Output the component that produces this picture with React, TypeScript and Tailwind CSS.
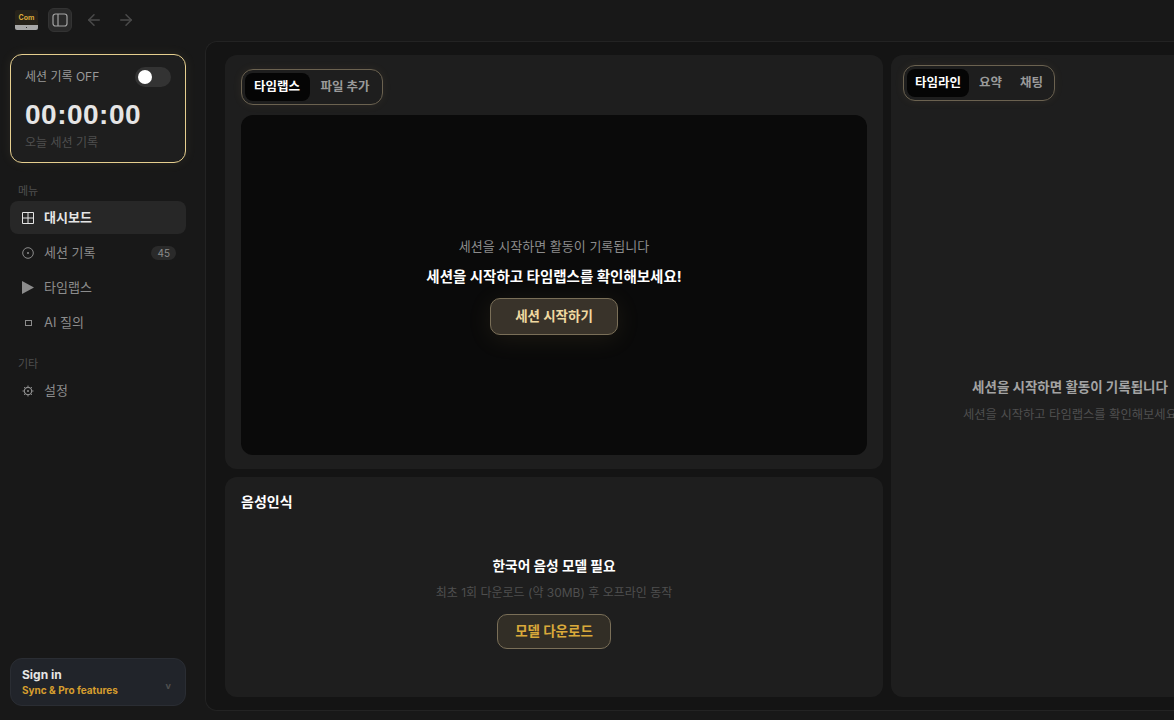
import { ArrowLeft, ArrowRight } from "lucide-react";
import type { ReactNode } from "react";

const FONT = "font-['Inter','Noto_Sans_CJK_KR',sans-serif]";

function PanelIcon() {
  return (
    <svg viewBox="0 0 16 16" className="h-4 w-4" fill="none" stroke="#a3a3a3" strokeWidth="1.2">
      <rect x="1" y="2" width="14" height="12" rx="2.5" />
      <path d="M6 2v12" />
    </svg>
  );
}

function Logo() {
  return (
    <div className="flex h-[20px] w-[23px] flex-col overflow-hidden rounded-[2px]">
      <div className="flex h-[15px] items-center justify-center bg-[#26221a] text-[7px] font-bold leading-none text-[#d9a93a]">
        Com
      </div>
      <div className="flex h-[5px] items-center justify-center bg-[#a8a8a8]">
        <span className="h-px w-px bg-[#333]" />
      </div>
    </div>
  );
}

function GridIcon() {
  return (
    <svg viewBox="0 0 12 12" className="h-3 w-3" fill="none" stroke="#e5e5e5" strokeWidth="1">
      <path d="M.5.5h11v11H.5zM6 .5v11M.5 6h11" />
    </svg>
  );
}

function DotCircleIcon() {
  return (
    <svg viewBox="0 0 12 12" className="h-3 w-3" fill="none" stroke="#8c8c8c" strokeWidth="1">
      <circle cx="6" cy="6" r="5.3" />
      <circle cx="6" cy="6" r="1" fill="#8c8c8c" stroke="none" />
    </svg>
  );
}

function PlayIcon() {
  return (
    <svg viewBox="0 0 12 13" className="h-[13px] w-3" fill="#8c8c8c">
      <path d="M0 0 12 6.5 0 13z" />
    </svg>
  );
}

function SquareIcon() {
  return <span className="h-[6px] w-[7px] border border-[#8c8c8c]" />;
}

function GearIcon() {
  return (
    <svg viewBox="0 0 12 12" className="h-3 w-3" fill="none" stroke="#8c8c8c">
      <circle cx="6" cy="6" r="3.7" strokeWidth="1.2" />
      <circle cx="6" cy="6" r="1" fill="#8c8c8c" stroke="none" />
      <path d="M6 .5v1.4M6 10.1v1.4M.5 6h1.4M10.1 6h1.4M2.1 2.1l1 1M8.9 8.9l1 1M2.1 9.9l1-1M8.9 3.1l1-1" strokeWidth="1" />
    </svg>
  );
}

function NavItem({ icon, label, active, badge }: { icon: ReactNode; label: string; active?: boolean; badge?: string }) {
  return (
    <div
      className={`flex h-[33px] items-center rounded-lg pl-[12px] pr-[10px] text-[13px] ${
        active ? "bg-[#272727] font-bold text-[#e5e5e5]" : "text-[#8c8c8c]"
      }`}
    >
      <span className="flex w-[12px] justify-center">{icon}</span>
      <span className="ml-[10px] flex-1">{label}</span>
      {badge && (
        <span className="rounded-full bg-[#2a2a2a] px-[6px] py-px text-[10px] leading-[12px] text-[#8c8c8c]">{badge}</span>
      )}
    </div>
  );
}

function Tabs({ items, pad }: { items: string[]; pad: string }) {
  return (
    <div className="flex w-fit gap-[2px] rounded-xl border border-[#6b6250] p-[3px] shadow-[0_0_10px_rgba(200,170,100,0.08)]">
      {items.map((t, i) => (
        <div
          key={t}
          className={`flex h-[28px] items-center rounded-lg text-[12.5px] font-bold ${pad} ${
            i === 0 ? "bg-[#050505] text-white" : "text-[#9a9a9a]"
          }`}
        >
          {t}
        </div>
      ))}
    </div>
  );
}

export default function App() {
  return (
    <div className={`flex h-[720px] w-[1174px] flex-col overflow-hidden bg-[#181818] ${FONT}`}>
      <div className="flex h-[41px] shrink-0 items-center pb-[1px] pl-[15px]">
        <Logo />
        <div className="ml-[10px] flex h-6 w-6 items-center justify-center rounded-md border border-[#333] bg-[#2a2a2a]">
          <PanelIcon />
        </div>
        <ArrowLeft className="ml-[13px] h-[18px] w-[18px] text-[#4a4a4a]" />
        <ArrowRight className="ml-[14px] h-[18px] w-[18px] text-[#4a4a4a]" />
      </div>

      <div className="flex min-h-0 flex-1 pb-[9px]">
        <aside className="flex w-[205px] shrink-0 flex-col pb-[5px] pl-[10px] pr-[19px] pt-[13px]">
          <div className="h-[109px] rounded-xl border border-[#e6cf8f] bg-[#1e1e1e] px-[14px] pt-[12px] shadow-[0_0_12px_rgba(230,207,143,0.08)]">
            <div className="flex items-center justify-between">
              <span className="text-[12px] text-[#999]">세션 기록 OFF</span>
              <div className="flex h-5 w-9 items-center rounded-full bg-[#333] px-[3px]">
                <span className="h-[14px] w-[14px] rounded-full bg-white" />
              </div>
            </div>
            <div className="mt-[11px] font-['Liberation_Sans',sans-serif] text-[28px] font-bold leading-[34px] tracking-[0.5px] text-[#e5e5e5]">
              00:00:00
            </div>
            <div className="mt-[2px] text-[12px] text-[#4f4f4f]">오늘 세션 기록</div>
          </div>

          <div className="mb-[2px] ml-[8px] mt-[21px] text-[11px] leading-[15px] text-[#4f4f4f]">메뉴</div>
          <div className="flex flex-col gap-[2px]">
            <NavItem icon={<GridIcon />} label="대시보드" active />
            <NavItem icon={<DotCircleIcon />} label="세션 기록" badge="45" />
            <NavItem icon={<PlayIcon />} label="타임랩스" />
            <NavItem icon={<SquareIcon />} label="AI 질의" />
          </div>
          <div className="mb-[2px] ml-[8px] mt-[18px] text-[11px] leading-[15px] text-[#4f4f4f]">기타</div>
          <NavItem icon={<GearIcon />} label="설정" />

          <div className="mt-auto flex h-[48px] items-center justify-between rounded-xl border border-[#2a2d33] bg-[#21242a] pl-[11px] pr-[14px]">
            <div>
              <div className="text-[12px] font-bold leading-[16px] text-[#e5e5e5]">Sign in</div>
              <div className="text-[10px] font-bold leading-[14px] text-[#d69e2e]">Sync &amp; Pro features</div>
            </div>
            <span className="mt-[8px] text-[9px] font-bold text-[#4f4f4f]">v</span>
          </div>
        </aside>

        <main className="flex min-w-0 flex-1 gap-2 rounded-l-xl border border-r-0 border-[#232323] bg-[#141414] pb-[13px] pl-[19px] pt-[13px]">
          <div className="flex w-[658px] shrink-0 flex-col gap-2">
            <section className="flex h-[414px] flex-col rounded-xl bg-[#1e1e1e] px-4 pb-[14px] pt-[14px]">
              <Tabs items={["타임랩스", "파일 추가"]} pad="pl-[9px] pr-[9.5px]" />
              <div className="mt-[10px] flex flex-1 flex-col items-center justify-center rounded-xl bg-[#0a0a0a] pt-[2px]">
                <p className="text-[13px] text-[#8c8c8c]">세션을 시작하면 활동이 기록됩니다</p>
                <p className="mt-[9px] text-[14.5px] font-bold text-white">세션을 시작하고 타임랩스를 확인해보세요!</p>
                <button className="mt-[10px] flex h-[37px] w-[128px] items-center justify-center rounded-[10px] border border-[#7a6f58] bg-[#39332a] text-[13.5px] font-bold text-[#f0d9a0] shadow-[0_4px_24px_rgba(200,170,100,0.1)]">
                  세션 시작하기
                </button>
              </div>
            </section>
            <section className="flex flex-1 flex-col rounded-xl bg-[#1e1e1e] px-4 pt-4">
              <h2 className="text-[14px] font-bold leading-[18px] text-white">음성인식</h2>
              <div className="mt-[46px] flex flex-col items-center">
                <p className="text-[13.7px] font-bold leading-[18px] text-white">한국어 음성 모델 필요</p>
                <p className="mt-[9px] text-[12px] leading-[18px] text-[#4f4f4f]">최초 1회 다운로드 (약 30MB) 후 오프라인 동작</p>
                <button className="mt-[12px] flex h-[35px] w-[114px] items-center justify-center rounded-[10px] border border-[#7a6f58] bg-[#322e26] text-[13.5px] font-bold text-[#d9a93a]">
                  모델 다운로드
                </button>
              </div>
            </section>
          </div>

          <section className="flex w-[358px] shrink-0 flex-col rounded-xl bg-[#1e1e1e] px-3 pt-[10px]">
            <Tabs items={["타임라인", "요약", "채팅"]} pad="px-[8px]" />
            <div className="flex flex-1 flex-col items-center justify-center pt-[3px]">
              <p className="text-[13.5px] font-bold text-[#a3a3a3]">세션을 시작하면 활동이 기록됩니다</p>
              <p className="mt-[9px] whitespace-nowrap text-[12.3px] text-[#4f4f4f]">세션을 시작하고 타임랩스를 확인해보세요</p>
            </div>
          </section>
        </main>
      </div>
    </div>
  );
}
